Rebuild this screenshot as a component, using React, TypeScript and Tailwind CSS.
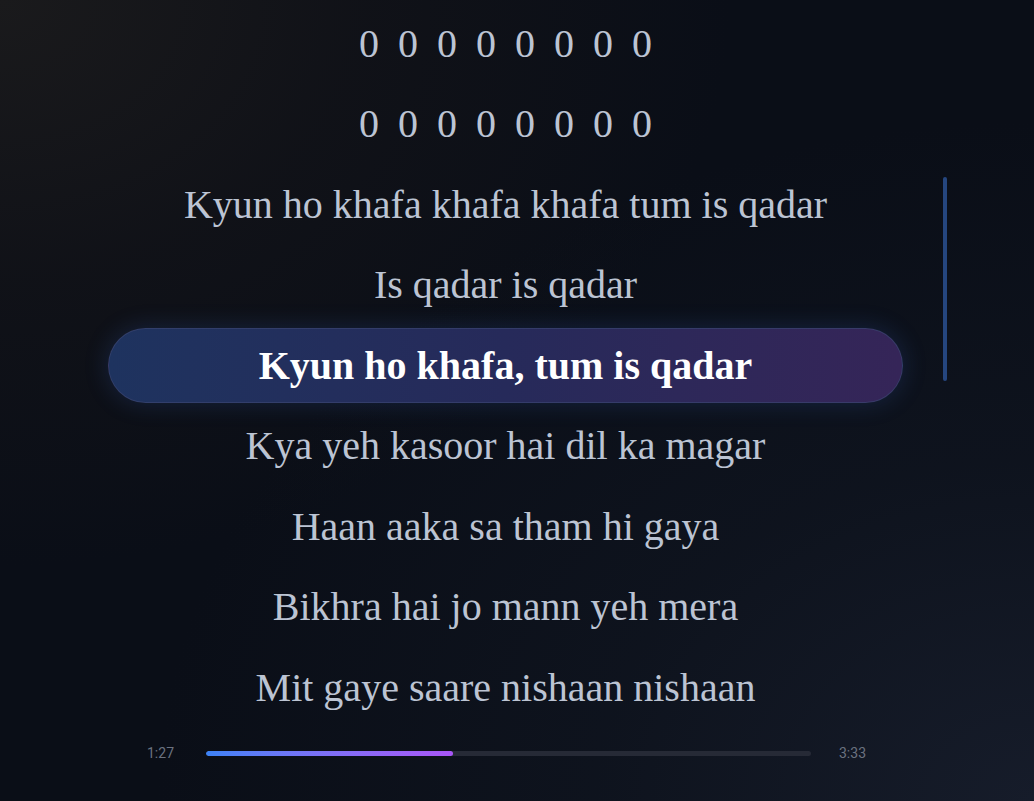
import React from 'react'

// Lyrics view: a centred scrolling list with the current line in a glowing pill

const LINES = [
  '0 0 0 0 0 0 0 0',
  '0 0 0 0 0 0 0 0',
  'Kyun ho khafa khafa khafa tum is qadar',
  'Is qadar is qadar',
  'Kyun ho khafa, tum is qadar',
  'Kya yeh kasoor hai dil ka magar',
  'Haan aaka sa tham hi gaya',
  'Bikhra hai jo mann yeh mera',
  'Mit gaye saare nishaan nishaan',
]

const ACTIVE = 4
const ELAPSED = 87
const DURATION = 213

function fmt(s: number) {
  const m = Math.floor(s / 60)
  const r = s % 60
  return `${m}:${r.toString().padStart(2, '0')}`
}

function LyricLine({ text, active }: { text: string; active: boolean }) {
  const isPlaceholder = text.startsWith('0 ')
  if (active) {
    return (
      <div className="h-[75px] flex items-center justify-center rounded-full border border-[#3a4470]/70 bg-gradient-to-r from-[#1e335f] via-[#262a5a] to-[#352558] shadow-[0_0_24px_rgba(59,110,210,0.22)]">
        <span className="text-[40px] font-bold text-white leading-none">{text}</span>
      </div>
    )
  }
  return (
    <div className="h-[75px] flex items-center justify-center">
      <span
        className={`text-[40px] text-[#bcc4d3] leading-none ${isPlaceholder ? '[word-spacing:9px]' : ''}`}
      >
        {text}
      </span>
    </div>
  )
}

export default function App() {
  const pct = (ELAPSED / DURATION) * 100

  return (
    <div className="w-[1034px] h-[801px] overflow-hidden relative bg-[#0a0e17] font-['Liberation_Serif',serif]">
      {/* background tint */}
      <div className="absolute inset-0 bg-[radial-gradient(ellipse_at_0%_0%,#1a1a1c_0%,rgba(20,20,24,0.6)_25%,transparent_50%)]" />
      <div className="absolute inset-0 bg-[radial-gradient(ellipse_at_100%_100%,#161c2a_0%,rgba(18,24,36,0.5)_30%,transparent_60%)]" />

      <div className="relative flex flex-col h-full">
        <div className="flex pl-[108px] pr-[86px] pt-[6px]">
          {/* lyric list */}
          <div className="w-[795px] flex flex-col gap-[5.5px]">
            {LINES.map((l, i) => (
              <LyricLine key={i} text={l} active={i === ACTIVE} />
            ))}
          </div>
          {/* scroll thumb */}
          <div className="ml-[40px] w-[4px]">
            <div className="mt-[171px] h-[204px] w-[4px] rounded-full bg-[#25467f]" />
          </div>
        </div>

        {/* progress */}
        <div className="flex items-center pl-[147px] mt-[18px] font-['Roboto',sans-serif] text-[14px] text-[#6b7280]">
          <span className="w-[59px]">{fmt(ELAPSED)}</span>
          <div className="w-[605px] h-[5px] rounded-full bg-[#262a36] overflow-hidden">
            <div
              className="h-full rounded-full bg-gradient-to-r from-[#3b82f6] to-[#a855f7]"
              style={{ width: `${pct}%` }}
            />
          </div>
          <span className="ml-[28px]">{fmt(DURATION)}</span>
        </div>
      </div>
    </div>
  )
}
